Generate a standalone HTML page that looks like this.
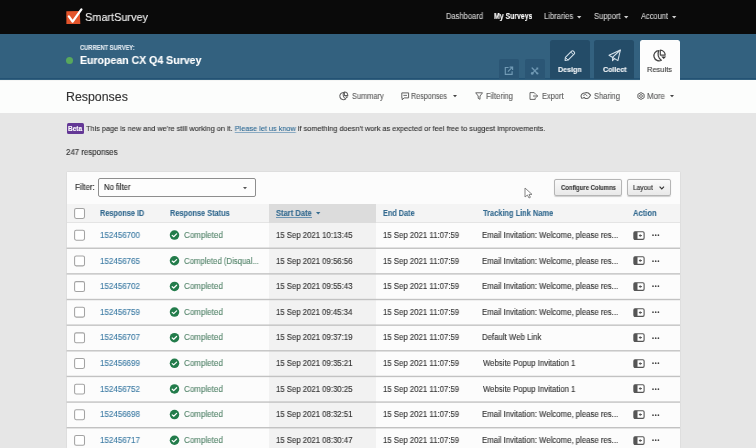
<!DOCTYPE html>
<html><head><meta charset="utf-8"><title>Responses - SmartSurvey</title>
<style>
html,body{margin:0;padding:0;}
body{width:756px;height:448px;overflow:hidden;position:relative;background:#e6e6e6;font-family:"Liberation Sans", sans-serif;}
.t{position:absolute;white-space:nowrap;line-height:1;will-change:transform;-webkit-text-stroke:0.12px currentColor;}
.r{position:absolute;}
svg.r{overflow:visible;}
</style></head><body>
<div class="r" style="left:0.00px;top:0.00px;width:756.00px;height:33.50px;background:#0a0a0a"></div>
<svg class="r" style="left:64px;top:7px;" width="20" height="19" viewBox="0 0 20 19"><path d="M2.3 4.2 L15.8 3.9 L16.3 16.9 L2.4 17.1 Z" fill="#e3542b"/><path d="M4.9 9.4 L8.6 14.6 L17.4 2.4" fill="none" stroke="#fff" stroke-width="2.3" stroke-linejoin="round" stroke-linecap="round"/></svg>
<div class="t" style="left:84.63px;top:11.00px;font-size:11.6px;color:#f0f0f0;font-weight:400;;transform:scaleX(0.9398);transform-origin:0 0;">SmartSurvey</div>
<div class="t" style="left:445.62px;top:12.00px;font-size:8.3px;color:#cfcfcf;font-weight:400;;transform:scaleX(0.9121);transform-origin:0 0;">Dashboard</div>
<div class="t" style="left:494.20px;top:12.00px;font-size:8.7px;color:#ffffff;font-weight:700;;transform:scaleX(0.7937);transform-origin:0 0;">My Surveys</div>
<div class="t" style="left:544.11px;top:12.00px;font-size:8.3px;color:#cfcfcf;font-weight:400;;transform:scaleX(0.9171);transform-origin:0 0;">Libraries</div>
<div class="t" style="left:593.54px;top:12.00px;font-size:8.3px;color:#cfcfcf;font-weight:400;;transform:scaleX(0.9123);transform-origin:0 0;">Support</div>
<div class="t" style="left:641.10px;top:12.00px;font-size:8.3px;color:#cfcfcf;font-weight:400;;transform:scaleX(0.9000);transform-origin:0 0;">Account</div>
<svg class="r" style="left:577.4px;top:15.6px;" width="5" height="3" viewBox="0 0 5 3"><path d="M0 0 L4.4 0 L2.2 2.4 Z" fill="#cfcfcf"/></svg>
<svg class="r" style="left:624.2px;top:15.6px;" width="5" height="3" viewBox="0 0 5 3"><path d="M0 0 L4.4 0 L2.2 2.4 Z" fill="#cfcfcf"/></svg>
<svg class="r" style="left:672.0px;top:15.6px;" width="5" height="3" viewBox="0 0 5 3"><path d="M0 0 L4.4 0 L2.2 2.4 Z" fill="#cfcfcf"/></svg>
<div class="r" style="left:0.00px;top:33.50px;width:756.00px;height:46.00px;background:#33617f"></div>
<div class="r" style="left:0.00px;top:78.30px;width:756.00px;height:1.20px;background:#235274"></div>
<div class="t" style="left:79.57px;top:45.00px;font-size:6.3px;color:#dfe7ee;font-weight:700;;transform:scaleX(0.9114);transform-origin:0 0;">CURRENT SURVEY:</div>
<div class="r" style="left:66.30px;top:56.60px;width:7.20px;height:7.20px;background:#58a85c;border-radius:50%"></div>
<div class="t" style="left:80.08px;top:55.00px;font-size:11.0px;color:#ffffff;font-weight:700;;transform:scaleX(0.9590);transform-origin:0 0;">European CX Q4 Survey</div>
<div class="r" style="left:499.00px;top:59.30px;width:20.00px;height:20.20px;background:#2b5675;border-radius:2px 2px 0 0"></div>
<div class="r" style="left:524.60px;top:59.30px;width:20.60px;height:20.20px;background:#2b5675;border-radius:2px 2px 0 0"></div>
<svg class="r" style="left:504px;top:65.5px;" width="10" height="10" viewBox="0 0 10 10"><path d="M4.6 1.5 H1.3 V8.3 H8.1 V5.2" fill="none" stroke="#719ab5" stroke-width="1.15"/><path d="M3.9 5.7 L8.5 1.2 M5.6 1.1 H8.6 V4.1" fill="none" stroke="#719ab5" stroke-width="1.15"/></svg>
<svg class="r" style="left:529.5px;top:65.5px;" width="10" height="10" viewBox="0 0 10 10"><g transform="translate(0.6 0.7) scale(0.86)"><path d="M1.8 1.6 L7.6 7.6" fill="none" stroke="#6f98b3" stroke-width="1.6" stroke-linecap="round"/><path d="M2 7.8 L7.5 2.3" fill="none" stroke="#6f98b3" stroke-width="1.4" stroke-linecap="round"/><circle cx="1.9" cy="7.9" r="1.6" fill="#6f98b3"/><path d="M6.6 0.9 L8.9 0.9 L8.9 3.2 L7.6 3.3 Z" fill="#6f98b3"/><circle cx="7.9" cy="7.9" r="1.3" fill="#6f98b3"/></g></svg>
<div class="r" style="left:549.70px;top:40.10px;width:40.40px;height:39.40px;background:#244c68;border-radius:2.5px 2.5px 0 0"></div>
<div class="r" style="left:594.10px;top:40.10px;width:40.30px;height:39.40px;background:#244c68;border-radius:2.5px 2.5px 0 0"></div>
<div class="r" style="left:639.50px;top:40.10px;width:40.70px;height:39.90px;background:#fdfdfd;border-radius:2.5px 2.5px 0 0"></div>
<svg class="r" style="left:562px;top:48.5px;" width="15" height="14" viewBox="0 0 15 14"><g transform="rotate(-45 7.5 7)"><path d="M1.2 7 L3.6 5.1 H12.4 Q13.8 5.1 13.8 7 Q13.8 8.9 12.4 8.9 H3.6 Z" fill="none" stroke="#d7e3ec" stroke-width="1.05" stroke-linejoin="round"/><path d="M11.2 5.1 V8.9 M3.6 5.1 V8.9" fill="none" stroke="#d7e3ec" stroke-width="0.9"/></g></svg>
<div class="t" style="left:557.63px;top:66.00px;font-size:7.6px;color:#f4f7fa;font-weight:700;;transform:scaleX(0.9347);transform-origin:0 0;">Design</div>
<svg class="r" style="left:608px;top:49px;" width="14" height="13" viewBox="0 0 14 13"><path d="M1 6.3 L12.4 1 L9.9 11.6 Z" fill="none" stroke="#d7e3ec" stroke-width="1.05" stroke-linejoin="round"/><path d="M12.4 1 L4.7 8.2 L4.5 11.7 L6.6 9.6" fill="none" stroke="#d7e3ec" stroke-width="1.05" stroke-linejoin="round"/></svg>
<div class="t" style="left:602.57px;top:66.00px;font-size:7.6px;color:#f4f7fa;font-weight:700;;transform:scaleX(0.9320);transform-origin:0 0;">Collect</div>
<svg class="r" style="left:648px;top:46px;" width="24" height="18" viewBox="0 0 24 18"><path d="M10.9 4.6 A5.1 5.1 0 1 0 13.4 14.2 A7.2 7.2 0 0 1 10.9 4.6 Z" fill="#fff" stroke="#444" stroke-width="1.2" stroke-linejoin="round"/><path d="M12.3 4.1 A5 5 0 0 1 17.2 9.1 H12.3 Z" fill="#fff" stroke="#444" stroke-width="1.15" stroke-linejoin="round"/><path d="M13.2 10.4 H18.2 L15.7 13.1 Z" fill="#333"/></svg>
<div class="t" style="left:647.49px;top:66.00px;font-size:7.9px;color:#363636;font-weight:400;;transform:scaleX(0.9505);transform-origin:0 0;">Results</div>
<div class="r" style="left:0.00px;top:79.50px;width:756.00px;height:33.00px;background:#fcfdfc"></div>
<div class="r" style="left:0.00px;top:80.00px;width:639.50px;height:1.00px;background:rgba(0,0,0,0.03)"></div>
<div class="t" style="left:65.88px;top:91.00px;font-size:12.1px;color:#333333;font-weight:400;;transform:scaleX(1.0220);transform-origin:0 0;">Responses</div>
<svg class="r" style="left:336px;top:88px;" width="20" height="16" viewBox="0 0 20 16"><path d="M7.7 4.5 A3.6 3.6 0 1 0 9.8 10.8 A4.5 4.5 0 0 1 7.7 4.5 Z" fill="#fff" stroke="#606060" stroke-width="1.05" stroke-linejoin="round"/><path d="M8.4 4.1 A3.5 3.5 0 0 1 11.8 7.5 H8.4 Z" fill="#fff" stroke="#606060" stroke-width="1.05"/><path d="M9 8.4 H12.4 L10.7 10.2 Z" fill="#555"/></svg>
<div class="t" style="left:352.35px;top:93.00px;font-size:8.2px;color:#5c5c5c;font-weight:400;;transform:scaleX(0.9014);transform-origin:0 0;">Summary</div>
<svg class="r" style="left:401px;top:92px;" width="9" height="9" viewBox="0 0 9 9"><path d="M0.8 0.9 H7.6 V5.9 H3.2 L1.2 7.8 V5.9 H0.8 Z" fill="none" stroke="#606060" stroke-width="1" stroke-linejoin="round"/><path d="M2.4 3.4 H6" stroke="#606060" stroke-width="0.9"/></svg>
<div class="t" style="left:411.24px;top:93.00px;font-size:8.2px;color:#5c5c5c;font-weight:400;;transform:scaleX(0.8800);transform-origin:0 0;">Responses</div>
<svg class="r" style="left:453px;top:95px;" width="5" height="3" viewBox="0 0 5 3"><path d="M0 0 L4 0 L2 2.2 Z" fill="#444"/></svg>
<svg class="r" style="left:474.5px;top:92px;" width="9" height="8" viewBox="0 0 9 8"><path d="M0.7 0.8 H7.5 L5 4 V7.3 L3.2 6.3 V4 Z" fill="none" stroke="#606060" stroke-width="0.95" stroke-linejoin="round"/></svg>
<div class="t" style="left:485.81px;top:93.00px;font-size:8.2px;color:#5c5c5c;font-weight:400;;transform:scaleX(0.9250);transform-origin:0 0;">Filtering</div>
<svg class="r" style="left:529px;top:92px;" width="10" height="8" viewBox="0 0 10 8"><path d="M5.2 0.6 H1 V7.4 H6.2 V5.4 M5.2 0.6 L6.2 1.8 V2.4" fill="none" stroke="#606060" stroke-width="0.95"/><path d="M4 4 H8.7 M7.2 2.6 L8.7 4 L7.2 5.4" fill="none" stroke="#606060" stroke-width="0.95"/></svg>
<div class="t" style="left:542.22px;top:93.00px;font-size:8.2px;color:#5c5c5c;font-weight:400;;transform:scaleX(0.9087);transform-origin:0 0;">Export</div>
<svg class="r" style="left:580px;top:91px;" width="12" height="9" viewBox="0 0 12 9"><path d="M1 5.2 C1.4 3 3 2 5 2.1 L6.4 1.6 L8.3 2 L10.6 4.2 L8.8 6.7 L7 7.6 L5.2 7.4 L4.2 6.4 L3 6.9 L1.6 7.2 Z" fill="none" stroke="#606060" stroke-width="1.05" stroke-linejoin="round"/><path d="M3.2 4.4 L5.6 3.4 L7.4 5.2" fill="none" stroke="#606060" stroke-width="0.9"/></svg>
<div class="t" style="left:594.04px;top:93.00px;font-size:8.2px;color:#5c5c5c;font-weight:400;;transform:scaleX(0.9174);transform-origin:0 0;">Sharing</div>
<svg class="r" style="left:636.5px;top:92px;" width="8" height="8" viewBox="0 0 8 8"><path d="M4 0.6 L7.1 2.3 V5.7 L4 7.4 L0.9 5.7 V2.3 Z" fill="none" stroke="#606060" stroke-width="1"/><circle cx="4" cy="4" r="1.4" fill="none" stroke="#606060" stroke-width="0.9"/></svg>
<div class="t" style="left:646.68px;top:93.00px;font-size:8.2px;color:#5c5c5c;font-weight:400;;transform:scaleX(0.9657);transform-origin:0 0;">More</div>
<svg class="r" style="left:669.5px;top:95px;" width="5" height="3" viewBox="0 0 5 3"><path d="M0 0 L4 0 L2 2.2 Z" fill="#444"/></svg>
<div class="r" style="left:0.00px;top:112.50px;width:756.00px;height:335.50px;background:#e6e6e6"></div>
<div class="r" style="left:66.60px;top:122.80px;width:17.60px;height:11.60px;background:#643896;border-radius:1.5px"></div>
<div class="t" style="left:67.90px;top:126.00px;font-size:6.5px;color:#ffffff;font-weight:700;;">Beta</div>
<div class="t" style="left:86.17px;top:125.00px;font-size:8.1px;color:#303030;font-weight:400;;transform:scaleX(0.9066);transform-origin:0 0;">This page is new and we&#39;re still working on it. <span style="color:#2f6b96;text-decoration:underline;text-decoration-color:#8aaac2">Please let us know</span> if something doesn&#39;t work as expected or feel free to suggest improvements.</div>
<div class="t" style="left:66.13px;top:148.00px;font-size:8.4px;color:#303030;font-weight:400;;transform:scaleX(0.9401);transform-origin:0 0;">247 responses</div>
<div class="r" style="left:66.60px;top:171.60px;width:613.40px;height:276.40px;background:#fcfcfc;box-shadow:0 0 1.5px rgba(0,0,0,0.12)"></div>
<div class="t" style="left:74.59px;top:183.00px;font-size:8.4px;color:#2a2a2a;font-weight:400;;transform:scaleX(0.9487);transform-origin:0 0;">Filter:</div>
<div class="r" style="left:98.20px;top:178.40px;width:157.50px;height:19.00px;border:1px solid #8e8e8e;border-radius:2px;box-sizing:border-box;background:#fdfdfd"></div>
<div class="t" style="left:104.30px;top:184.00px;font-size:8.2px;color:#222222;font-weight:400;;transform:scaleX(0.9382);transform-origin:0 0;">No filter</div>
<svg class="r" style="left:243px;top:186.5px;" width="5" height="3" viewBox="0 0 5 3"><path d="M0 0 L4 0 L2 2.2 Z" fill="#555"/></svg>
<div class="r" style="left:554.40px;top:179.20px;width:68.00px;height:17.20px;border:1px solid #b5b5b5;border-radius:2px;box-sizing:border-box;background:linear-gradient(#fafafa,#e9e9e9);box-shadow:0 0.6px 1px rgba(0,0,0,0.18)"></div>
<div class="t" style="left:561.09px;top:185.00px;font-size:6.9px;color:#3a3a3a;font-weight:700;;transform:scaleX(0.8598);transform-origin:0 0;">Configure Columns</div>
<div class="r" style="left:626.70px;top:179.20px;width:44.80px;height:17.20px;border:1px solid #b5b5b5;border-radius:2px;box-sizing:border-box;background:linear-gradient(#fafafa,#e9e9e9);box-shadow:0 0.6px 1px rgba(0,0,0,0.18)"></div>
<div class="t" style="left:633.05px;top:184.00px;font-size:7.3px;color:#2a2a2a;font-weight:400;;transform:scaleX(0.9070);transform-origin:0 0;">Layout</div>
<svg class="r" style="left:658.5px;top:185.5px;" width="6" height="4" viewBox="0 0 6 4"><path d="M0.6 0.7 L2.8 2.9 L5 0.7" fill="none" stroke="#333" stroke-width="1.15"/></svg>
<svg class="r" style="left:524px;top:187px;" width="9" height="12" viewBox="0 0 9 12"><path d="M1 1 V10 L3.4 8 L5 11 L6.4 10.3 L5 7.4 H8 Z" fill="#fff" stroke="#777" stroke-width="0.9" stroke-linejoin="round"/></svg>
<div class="r" style="left:66.60px;top:204.30px;width:613.40px;height:18.30px;background:#f4f4f4"></div>
<div class="r" style="left:66.60px;top:222.00px;width:613.40px;height:1.00px;background:#e4e4e4"></div>
<div class="r" style="left:269.00px;top:204.30px;width:106.60px;height:18.30px;background:#dcdcdc"></div>
<div class="r" style="left:269.00px;top:223.00px;width:106.60px;height:225.00px;background:#f2f2f2"></div>
<svg class="r" style="left:0;top:0" width="756" height="448" viewBox="0 0 756 448"><rect x="74.6" y="208.50" width="9.9" height="9.9" rx="1.6" fill="#fff" stroke="#a3a3a3" stroke-width="1.05"/><rect x="66.6" y="247.54" width="613.40" height="1.4" fill="#c2c2c2"/><rect x="74.6" y="230.32" width="9.9" height="9.9" rx="1.6" fill="#fff" stroke="#a3a3a3" stroke-width="1.05"/><rect x="66.6" y="273.18" width="613.40" height="1.4" fill="#c2c2c2"/><rect x="74.6" y="255.96" width="9.9" height="9.9" rx="1.6" fill="#fff" stroke="#a3a3a3" stroke-width="1.05"/><rect x="66.6" y="298.82" width="613.40" height="1.4" fill="#c2c2c2"/><rect x="74.6" y="281.60" width="9.9" height="9.9" rx="1.6" fill="#fff" stroke="#a3a3a3" stroke-width="1.05"/><rect x="66.6" y="324.46" width="613.40" height="1.4" fill="#c2c2c2"/><rect x="74.6" y="307.24" width="9.9" height="9.9" rx="1.6" fill="#fff" stroke="#a3a3a3" stroke-width="1.05"/><rect x="66.6" y="350.10" width="613.40" height="1.4" fill="#c2c2c2"/><rect x="74.6" y="332.88" width="9.9" height="9.9" rx="1.6" fill="#fff" stroke="#a3a3a3" stroke-width="1.05"/><rect x="66.6" y="375.74" width="613.40" height="1.4" fill="#c2c2c2"/><rect x="74.6" y="358.52" width="9.9" height="9.9" rx="1.6" fill="#fff" stroke="#a3a3a3" stroke-width="1.05"/><rect x="66.6" y="401.38" width="613.40" height="1.4" fill="#c2c2c2"/><rect x="74.6" y="384.16" width="9.9" height="9.9" rx="1.6" fill="#fff" stroke="#a3a3a3" stroke-width="1.05"/><rect x="66.6" y="427.02" width="613.40" height="1.4" fill="#c2c2c2"/><rect x="74.6" y="409.80" width="9.9" height="9.9" rx="1.6" fill="#fff" stroke="#a3a3a3" stroke-width="1.05"/><rect x="74.6" y="435.44" width="9.9" height="9.9" rx="1.6" fill="#fff" stroke="#a3a3a3" stroke-width="1.05"/></svg>
<div class="t" style="left:100.17px;top:209.00px;font-size:8.6px;color:#356b90;font-weight:700;;transform:scaleX(0.8507);transform-origin:0 0;">Response ID</div>
<div class="t" style="left:169.57px;top:209.00px;font-size:8.6px;color:#356b90;font-weight:700;;transform:scaleX(0.8551);transform-origin:0 0;">Response Status</div>
<div class="t" style="left:276.18px;top:209.00px;font-size:8.6px;color:#356b90;font-weight:700;;transform:scaleX(0.8800);transform-origin:0 0;">Start Date</div>
<div class="r" style="left:276.40px;top:216.70px;width:35.40px;height:0.80px;background:#6b94b3"></div>
<svg class="r" style="left:316px;top:211.8px;" width="5" height="3" viewBox="0 0 5 3"><path d="M0 0 L4.4 0 L2.2 2.4 Z" fill="#356b90"/></svg>
<div class="t" style="left:382.58px;top:209.00px;font-size:8.6px;color:#356b90;font-weight:700;;transform:scaleX(0.8493);transform-origin:0 0;">End Date</div>
<div class="t" style="left:483.00px;top:209.00px;font-size:8.6px;color:#356b90;font-weight:700;;transform:scaleX(0.8642);transform-origin:0 0;">Tracking Link Name</div>
<div class="t" style="left:632.78px;top:209.00px;font-size:8.6px;color:#356b90;font-weight:700;;transform:scaleX(0.8846);transform-origin:0 0;">Action</div>
<div class="t" style="left:100.30px;top:231.00px;font-size:8.5px;color:#3b7aa3;font-weight:400;;transform:scaleX(0.9398);transform-origin:0 0;">152456700</div>
<svg class="r" style="left:169px;top:229px;" width="12" height="12" viewBox="0 0 12 12"><circle cx="5.5" cy="6.12" r="4.75" fill="#237c4b"/><path d="M3.2 6.42 l1.5 1.3 l2.9 -2.8" fill="none" stroke="#fff" stroke-width="1.2" stroke-linecap="round" stroke-linejoin="round"/></svg>
<div class="t" style="left:183.83px;top:231.00px;font-size:8.5px;color:#53846a;font-weight:400;;transform:scaleX(0.9425);transform-origin:0 0;">Completed</div>
<div class="t" style="left:276.31px;top:231.00px;font-size:8.5px;color:#303030;font-weight:400;;transform:scaleX(0.9139);transform-origin:0 0;">15 Sep 2021 10:13:45</div>
<div class="t" style="left:382.81px;top:231.00px;font-size:8.5px;color:#303030;font-weight:400;;transform:scaleX(0.9171);transform-origin:0 0;">15 Sep 2021 11:07:59</div>
<div class="t" style="left:482.31px;top:231.00px;font-size:8.5px;color:#303030;font-weight:400;;transform:scaleX(0.9161);transform-origin:0 0;">Email Invitation: Welcome, please res...</div>
<svg class="r" style="left:632.5px;top:230.62px;" width="12" height="9" viewBox="0 0 12 9"><rect x="0.9" y="0.8" width="10.2" height="7.6" rx="1.3" fill="#fff" stroke="#555" stroke-width="1.1"/><rect x="0.9" y="0.8" width="3.6" height="7.6" fill="#555"/><path d="M9 4.6 H7" fill="none" stroke="#555" stroke-width="1"/><path d="M5.6 4.6 L7.6 3 V6.2 Z" fill="#555"/></svg>
<svg class="r" style="left:651.5px;top:234.02px;" width="8" height="3" viewBox="0 0 8 3"><circle cx="1" cy="1.2" r="0.85" fill="#444"/><circle cx="3.7" cy="1.2" r="0.85" fill="#444"/><circle cx="6.4" cy="1.2" r="0.85" fill="#444"/></svg>
<div class="t" style="left:100.30px;top:257.00px;font-size:8.5px;color:#3b7aa3;font-weight:400;;transform:scaleX(0.9398);transform-origin:0 0;">152456765</div>
<svg class="r" style="left:169px;top:254px;" width="12" height="12" viewBox="0 0 12 12"><circle cx="5.5" cy="6.76" r="4.75" fill="#237c4b"/><path d="M3.2 7.06 l1.5 1.3 l2.9 -2.8" fill="none" stroke="#fff" stroke-width="1.2" stroke-linecap="round" stroke-linejoin="round"/></svg>
<div class="t" style="left:183.84px;top:257.00px;font-size:8.5px;color:#53846a;font-weight:400;;transform:scaleX(0.9168);transform-origin:0 0;">Completed (Disqual...</div>
<div class="t" style="left:276.31px;top:257.00px;font-size:8.5px;color:#303030;font-weight:400;;transform:scaleX(0.9139);transform-origin:0 0;">15 Sep 2021 09:56:56</div>
<div class="t" style="left:382.81px;top:257.00px;font-size:8.5px;color:#303030;font-weight:400;;transform:scaleX(0.9171);transform-origin:0 0;">15 Sep 2021 11:07:59</div>
<div class="t" style="left:482.31px;top:257.00px;font-size:8.5px;color:#303030;font-weight:400;;transform:scaleX(0.9161);transform-origin:0 0;">Email Invitation: Welcome, please res...</div>
<svg class="r" style="left:632.5px;top:256.26px;" width="12" height="9" viewBox="0 0 12 9"><rect x="0.9" y="0.8" width="10.2" height="7.6" rx="1.3" fill="#fff" stroke="#555" stroke-width="1.1"/><rect x="0.9" y="0.8" width="3.6" height="7.6" fill="#555"/><path d="M9 4.6 H7" fill="none" stroke="#555" stroke-width="1"/><path d="M5.6 4.6 L7.6 3 V6.2 Z" fill="#555"/></svg>
<svg class="r" style="left:651.5px;top:259.66px;" width="8" height="3" viewBox="0 0 8 3"><circle cx="1" cy="1.2" r="0.85" fill="#444"/><circle cx="3.7" cy="1.2" r="0.85" fill="#444"/><circle cx="6.4" cy="1.2" r="0.85" fill="#444"/></svg>
<div class="t" style="left:100.30px;top:282.00px;font-size:8.5px;color:#3b7aa3;font-weight:400;;transform:scaleX(0.9398);transform-origin:0 0;">152456702</div>
<svg class="r" style="left:169px;top:280px;" width="12" height="12" viewBox="0 0 12 12"><circle cx="5.5" cy="6.40" r="4.75" fill="#237c4b"/><path d="M3.2 6.70 l1.5 1.3 l2.9 -2.8" fill="none" stroke="#fff" stroke-width="1.2" stroke-linecap="round" stroke-linejoin="round"/></svg>
<div class="t" style="left:183.83px;top:282.00px;font-size:8.5px;color:#53846a;font-weight:400;;transform:scaleX(0.9425);transform-origin:0 0;">Completed</div>
<div class="t" style="left:276.31px;top:282.00px;font-size:8.5px;color:#303030;font-weight:400;;transform:scaleX(0.9139);transform-origin:0 0;">15 Sep 2021 09:55:43</div>
<div class="t" style="left:382.81px;top:282.00px;font-size:8.5px;color:#303030;font-weight:400;;transform:scaleX(0.9171);transform-origin:0 0;">15 Sep 2021 11:07:59</div>
<div class="t" style="left:482.31px;top:282.00px;font-size:8.5px;color:#303030;font-weight:400;;transform:scaleX(0.9161);transform-origin:0 0;">Email Invitation: Welcome, please res...</div>
<svg class="r" style="left:632.5px;top:281.9px;" width="12" height="9" viewBox="0 0 12 9"><rect x="0.9" y="0.8" width="10.2" height="7.6" rx="1.3" fill="#fff" stroke="#555" stroke-width="1.1"/><rect x="0.9" y="0.8" width="3.6" height="7.6" fill="#555"/><path d="M9 4.6 H7" fill="none" stroke="#555" stroke-width="1"/><path d="M5.6 4.6 L7.6 3 V6.2 Z" fill="#555"/></svg>
<svg class="r" style="left:651.5px;top:285.3px;" width="8" height="3" viewBox="0 0 8 3"><circle cx="1" cy="1.2" r="0.85" fill="#444"/><circle cx="3.7" cy="1.2" r="0.85" fill="#444"/><circle cx="6.4" cy="1.2" r="0.85" fill="#444"/></svg>
<div class="t" style="left:100.30px;top:308.00px;font-size:8.5px;color:#3b7aa3;font-weight:400;;transform:scaleX(0.9398);transform-origin:0 0;">152456759</div>
<svg class="r" style="left:169px;top:306px;" width="12" height="12" viewBox="0 0 12 12"><circle cx="5.5" cy="6.04" r="4.75" fill="#237c4b"/><path d="M3.2 6.34 l1.5 1.3 l2.9 -2.8" fill="none" stroke="#fff" stroke-width="1.2" stroke-linecap="round" stroke-linejoin="round"/></svg>
<div class="t" style="left:183.83px;top:308.00px;font-size:8.5px;color:#53846a;font-weight:400;;transform:scaleX(0.9425);transform-origin:0 0;">Completed</div>
<div class="t" style="left:276.32px;top:308.00px;font-size:8.5px;color:#303030;font-weight:400;;transform:scaleX(0.9112);transform-origin:0 0;">15 Sep 2021 09:45:34</div>
<div class="t" style="left:382.81px;top:308.00px;font-size:8.5px;color:#303030;font-weight:400;;transform:scaleX(0.9171);transform-origin:0 0;">15 Sep 2021 11:07:59</div>
<div class="t" style="left:482.31px;top:308.00px;font-size:8.5px;color:#303030;font-weight:400;;transform:scaleX(0.9161);transform-origin:0 0;">Email Invitation: Welcome, please res...</div>
<svg class="r" style="left:632.5px;top:307.53999999999996px;" width="12" height="9" viewBox="0 0 12 9"><rect x="0.9" y="0.8" width="10.2" height="7.6" rx="1.3" fill="#fff" stroke="#555" stroke-width="1.1"/><rect x="0.9" y="0.8" width="3.6" height="7.6" fill="#555"/><path d="M9 4.6 H7" fill="none" stroke="#555" stroke-width="1"/><path d="M5.6 4.6 L7.6 3 V6.2 Z" fill="#555"/></svg>
<svg class="r" style="left:651.5px;top:310.94px;" width="8" height="3" viewBox="0 0 8 3"><circle cx="1" cy="1.2" r="0.85" fill="#444"/><circle cx="3.7" cy="1.2" r="0.85" fill="#444"/><circle cx="6.4" cy="1.2" r="0.85" fill="#444"/></svg>
<div class="t" style="left:100.30px;top:333.00px;font-size:8.5px;color:#3b7aa3;font-weight:400;;transform:scaleX(0.9398);transform-origin:0 0;">152456707</div>
<svg class="r" style="left:169px;top:331px;" width="12" height="12" viewBox="0 0 12 12"><circle cx="5.5" cy="6.68" r="4.75" fill="#237c4b"/><path d="M3.2 6.98 l1.5 1.3 l2.9 -2.8" fill="none" stroke="#fff" stroke-width="1.2" stroke-linecap="round" stroke-linejoin="round"/></svg>
<div class="t" style="left:183.83px;top:333.00px;font-size:8.5px;color:#53846a;font-weight:400;;transform:scaleX(0.9425);transform-origin:0 0;">Completed</div>
<div class="t" style="left:276.31px;top:333.00px;font-size:8.5px;color:#303030;font-weight:400;;transform:scaleX(0.9139);transform-origin:0 0;">15 Sep 2021 09:37:19</div>
<div class="t" style="left:382.81px;top:333.00px;font-size:8.5px;color:#303030;font-weight:400;;transform:scaleX(0.9171);transform-origin:0 0;">15 Sep 2021 11:07:59</div>
<div class="t" style="left:482.31px;top:333.00px;font-size:8.5px;color:#303030;font-weight:400;;transform:scaleX(0.9192);transform-origin:0 0;">Default Web Link</div>
<svg class="r" style="left:632.5px;top:333.17999999999995px;" width="12" height="9" viewBox="0 0 12 9"><rect x="0.9" y="0.8" width="10.2" height="7.6" rx="1.3" fill="#fff" stroke="#555" stroke-width="1.1"/><rect x="0.9" y="0.8" width="3.6" height="7.6" fill="#555"/><path d="M9 4.6 H7" fill="none" stroke="#555" stroke-width="1"/><path d="M5.6 4.6 L7.6 3 V6.2 Z" fill="#555"/></svg>
<svg class="r" style="left:651.5px;top:336.58px;" width="8" height="3" viewBox="0 0 8 3"><circle cx="1" cy="1.2" r="0.85" fill="#444"/><circle cx="3.7" cy="1.2" r="0.85" fill="#444"/><circle cx="6.4" cy="1.2" r="0.85" fill="#444"/></svg>
<div class="t" style="left:100.30px;top:359.00px;font-size:8.5px;color:#3b7aa3;font-weight:400;;transform:scaleX(0.9398);transform-origin:0 0;">152456699</div>
<svg class="r" style="left:169px;top:357px;" width="12" height="12" viewBox="0 0 12 12"><circle cx="5.5" cy="6.32" r="4.75" fill="#237c4b"/><path d="M3.2 6.62 l1.5 1.3 l2.9 -2.8" fill="none" stroke="#fff" stroke-width="1.2" stroke-linecap="round" stroke-linejoin="round"/></svg>
<div class="t" style="left:183.83px;top:359.00px;font-size:8.5px;color:#53846a;font-weight:400;;transform:scaleX(0.9425);transform-origin:0 0;">Completed</div>
<div class="t" style="left:276.31px;top:359.00px;font-size:8.5px;color:#303030;font-weight:400;;transform:scaleX(0.9139);transform-origin:0 0;">15 Sep 2021 09:35:21</div>
<div class="t" style="left:382.81px;top:359.00px;font-size:8.5px;color:#303030;font-weight:400;;transform:scaleX(0.9171);transform-origin:0 0;">15 Sep 2021 11:07:59</div>
<div class="t" style="left:483.00px;top:359.00px;font-size:8.5px;color:#303030;font-weight:400;;transform:scaleX(0.9144);transform-origin:0 0;">Website Popup Invitation 1</div>
<svg class="r" style="left:632.5px;top:358.81999999999994px;" width="12" height="9" viewBox="0 0 12 9"><rect x="0.9" y="0.8" width="10.2" height="7.6" rx="1.3" fill="#fff" stroke="#555" stroke-width="1.1"/><rect x="0.9" y="0.8" width="3.6" height="7.6" fill="#555"/><path d="M9 4.6 H7" fill="none" stroke="#555" stroke-width="1"/><path d="M5.6 4.6 L7.6 3 V6.2 Z" fill="#555"/></svg>
<svg class="r" style="left:651.5px;top:362.21999999999997px;" width="8" height="3" viewBox="0 0 8 3"><circle cx="1" cy="1.2" r="0.85" fill="#444"/><circle cx="3.7" cy="1.2" r="0.85" fill="#444"/><circle cx="6.4" cy="1.2" r="0.85" fill="#444"/></svg>
<div class="t" style="left:100.30px;top:385.00px;font-size:8.5px;color:#3b7aa3;font-weight:400;;transform:scaleX(0.9398);transform-origin:0 0;">152456752</div>
<svg class="r" style="left:169px;top:383px;" width="12" height="12" viewBox="0 0 12 12"><circle cx="5.5" cy="5.96" r="4.75" fill="#237c4b"/><path d="M3.2 6.26 l1.5 1.3 l2.9 -2.8" fill="none" stroke="#fff" stroke-width="1.2" stroke-linecap="round" stroke-linejoin="round"/></svg>
<div class="t" style="left:183.83px;top:385.00px;font-size:8.5px;color:#53846a;font-weight:400;;transform:scaleX(0.9425);transform-origin:0 0;">Completed</div>
<div class="t" style="left:276.31px;top:385.00px;font-size:8.5px;color:#303030;font-weight:400;;transform:scaleX(0.9139);transform-origin:0 0;">15 Sep 2021 09:30:25</div>
<div class="t" style="left:382.81px;top:385.00px;font-size:8.5px;color:#303030;font-weight:400;;transform:scaleX(0.9171);transform-origin:0 0;">15 Sep 2021 11:07:59</div>
<div class="t" style="left:483.00px;top:385.00px;font-size:8.5px;color:#303030;font-weight:400;;transform:scaleX(0.9144);transform-origin:0 0;">Website Popup Invitation 1</div>
<svg class="r" style="left:632.5px;top:384.46px;" width="12" height="9" viewBox="0 0 12 9"><rect x="0.9" y="0.8" width="10.2" height="7.6" rx="1.3" fill="#fff" stroke="#555" stroke-width="1.1"/><rect x="0.9" y="0.8" width="3.6" height="7.6" fill="#555"/><path d="M9 4.6 H7" fill="none" stroke="#555" stroke-width="1"/><path d="M5.6 4.6 L7.6 3 V6.2 Z" fill="#555"/></svg>
<svg class="r" style="left:651.5px;top:387.86px;" width="8" height="3" viewBox="0 0 8 3"><circle cx="1" cy="1.2" r="0.85" fill="#444"/><circle cx="3.7" cy="1.2" r="0.85" fill="#444"/><circle cx="6.4" cy="1.2" r="0.85" fill="#444"/></svg>
<div class="t" style="left:100.30px;top:410.00px;font-size:8.5px;color:#3b7aa3;font-weight:400;;transform:scaleX(0.9398);transform-origin:0 0;">152456698</div>
<svg class="r" style="left:169px;top:408px;" width="12" height="12" viewBox="0 0 12 12"><circle cx="5.5" cy="6.60" r="4.75" fill="#237c4b"/><path d="M3.2 6.90 l1.5 1.3 l2.9 -2.8" fill="none" stroke="#fff" stroke-width="1.2" stroke-linecap="round" stroke-linejoin="round"/></svg>
<div class="t" style="left:183.83px;top:410.00px;font-size:8.5px;color:#53846a;font-weight:400;;transform:scaleX(0.9425);transform-origin:0 0;">Completed</div>
<div class="t" style="left:276.31px;top:410.00px;font-size:8.5px;color:#303030;font-weight:400;;transform:scaleX(0.9139);transform-origin:0 0;">15 Sep 2021 08:32:51</div>
<div class="t" style="left:382.81px;top:410.00px;font-size:8.5px;color:#303030;font-weight:400;;transform:scaleX(0.9171);transform-origin:0 0;">15 Sep 2021 11:07:59</div>
<div class="t" style="left:482.31px;top:410.00px;font-size:8.5px;color:#303030;font-weight:400;;transform:scaleX(0.9161);transform-origin:0 0;">Email Invitation: Welcome, please res...</div>
<svg class="r" style="left:632.5px;top:410.1px;" width="12" height="9" viewBox="0 0 12 9"><rect x="0.9" y="0.8" width="10.2" height="7.6" rx="1.3" fill="#fff" stroke="#555" stroke-width="1.1"/><rect x="0.9" y="0.8" width="3.6" height="7.6" fill="#555"/><path d="M9 4.6 H7" fill="none" stroke="#555" stroke-width="1"/><path d="M5.6 4.6 L7.6 3 V6.2 Z" fill="#555"/></svg>
<svg class="r" style="left:651.5px;top:413.50000000000006px;" width="8" height="3" viewBox="0 0 8 3"><circle cx="1" cy="1.2" r="0.85" fill="#444"/><circle cx="3.7" cy="1.2" r="0.85" fill="#444"/><circle cx="6.4" cy="1.2" r="0.85" fill="#444"/></svg>
<div class="t" style="left:100.30px;top:436.00px;font-size:8.5px;color:#3b7aa3;font-weight:400;;transform:scaleX(0.9398);transform-origin:0 0;">152456717</div>
<svg class="r" style="left:169px;top:434px;" width="12" height="12" viewBox="0 0 12 12"><circle cx="5.5" cy="6.24" r="4.75" fill="#237c4b"/><path d="M3.2 6.54 l1.5 1.3 l2.9 -2.8" fill="none" stroke="#fff" stroke-width="1.2" stroke-linecap="round" stroke-linejoin="round"/></svg>
<div class="t" style="left:183.83px;top:436.00px;font-size:8.5px;color:#53846a;font-weight:400;;transform:scaleX(0.9425);transform-origin:0 0;">Completed</div>
<div class="t" style="left:276.31px;top:436.00px;font-size:8.5px;color:#303030;font-weight:400;;transform:scaleX(0.9139);transform-origin:0 0;">15 Sep 2021 08:30:47</div>
<div class="t" style="left:382.81px;top:436.00px;font-size:8.5px;color:#303030;font-weight:400;;transform:scaleX(0.9171);transform-origin:0 0;">15 Sep 2021 11:07:59</div>
<div class="t" style="left:482.31px;top:436.00px;font-size:8.5px;color:#303030;font-weight:400;;transform:scaleX(0.9161);transform-origin:0 0;">Email Invitation: Welcome, please res...</div>
<svg class="r" style="left:632.5px;top:435.74px;" width="12" height="9" viewBox="0 0 12 9"><rect x="0.9" y="0.8" width="10.2" height="7.6" rx="1.3" fill="#fff" stroke="#555" stroke-width="1.1"/><rect x="0.9" y="0.8" width="3.6" height="7.6" fill="#555"/><path d="M9 4.6 H7" fill="none" stroke="#555" stroke-width="1"/><path d="M5.6 4.6 L7.6 3 V6.2 Z" fill="#555"/></svg>
<svg class="r" style="left:651.5px;top:439.14000000000004px;" width="8" height="3" viewBox="0 0 8 3"><circle cx="1" cy="1.2" r="0.85" fill="#444"/><circle cx="3.7" cy="1.2" r="0.85" fill="#444"/><circle cx="6.4" cy="1.2" r="0.85" fill="#444"/></svg>
</body></html>
